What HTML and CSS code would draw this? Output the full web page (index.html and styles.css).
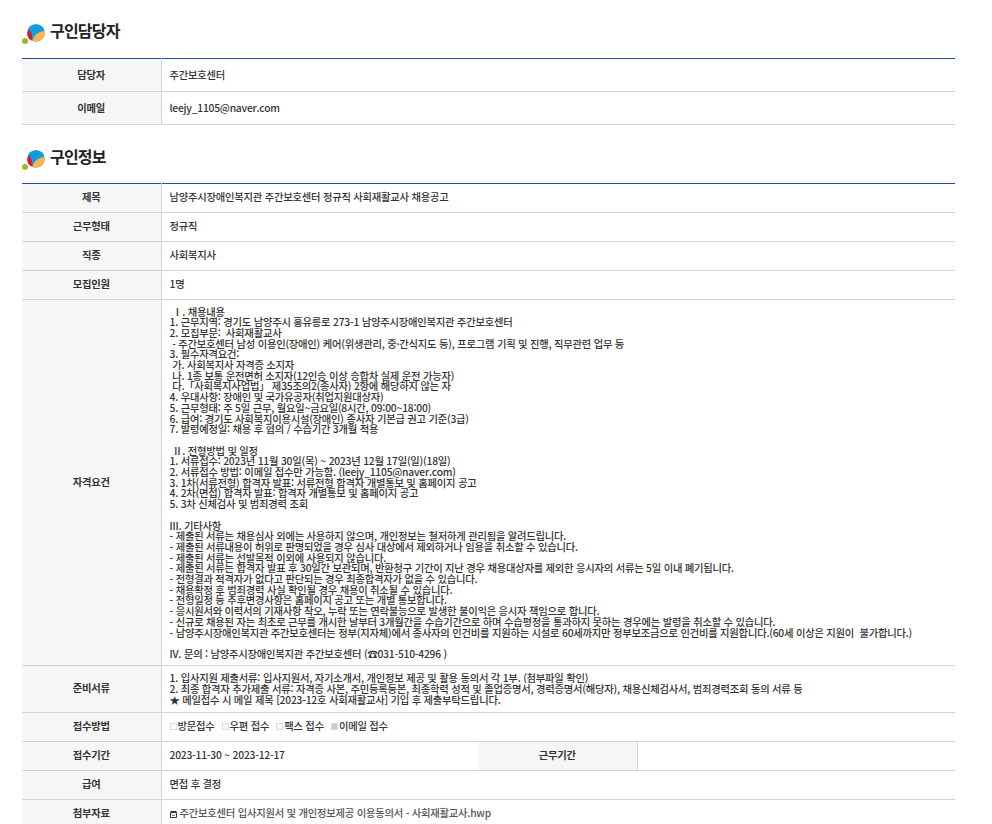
FILE: index.html
```html
<!DOCTYPE html>
<html lang="ko">
<head>
<meta charset="utf-8">
<title>구인정보</title>
<link rel="stylesheet" href="styles.css">
</head>
<body>
<main class="page">
  <h2 class="heading">
    <svg class="logo" viewBox="0 0 23 20" width="23" height="20"><circle cx="3" cy="17" r="3" fill="#97bb2c"/><circle cx="14" cy="8.800" r="8.800" fill="#0f9ee2"/><path d="M10.500 17C11 12 16 7.500 22.800 7 23.500 12.500 20 17.600 14 17.600c-1.300 0-2.500-.2-3.500-.6z" fill="#fbb450"/><path d="M7 14.800C5 12.500 4.700 8.500 6.500 5.500 9.500 7.500 10.500 11 10 16.500 9 16.200 7.800 15.600 7 14.800z" fill="#e4142b"/></svg>
    <span>구인담당자</span>
  </h2>
  <table class="info info-contact">
    <colgroup><col class="c-label"><col></colgroup>
    <tr class="r-contact"><th>담당자</th><td>주간보호센터</td></tr>
    <tr class="r-contact"><th>이메일</th><td>leejy_1105@naver.com</td></tr>
  </table>
  <h2 class="heading heading-second">
    <svg class="logo" viewBox="0 0 23 20" width="23" height="20"><circle cx="3" cy="17" r="3" fill="#97bb2c"/><circle cx="14" cy="8.800" r="8.800" fill="#0f9ee2"/><path d="M10.500 17C11 12 16 7.500 22.800 7 23.500 12.500 20 17.600 14 17.600c-1.300 0-2.500-.2-3.500-.6z" fill="#fbb450"/><path d="M7 14.800C5 12.500 4.700 8.500 6.500 5.500 9.500 7.500 10.500 11 10 16.500 9 16.200 7.800 15.600 7 14.800z" fill="#e4142b"/></svg>
    <span>구인정보</span>
  </h2>
  <table class="info">
    <colgroup><col class="c-label"><col class="c-mid"><col class="c-label2"><col></colgroup>
    <tr><th>제목</th><td colspan="3">남양주시장애인복지관 주간보호센터 정규직 사회재활교사 채용공고</td></tr>
    <tr><th>근무형태</th><td colspan="3">정규직</td></tr>
    <tr><th>직종</th><td colspan="3">사회복지사</td></tr>
    <tr><th>모집인원</th><td colspan="3">1명</td></tr>
    <tr><th>자격요건</th><td colspan="3" class="long"> Ⅰ. 채용내용
1. 근무지역: 경기도 남양주시 홍유릉로 273-1 남양주시장애인복지관 주간보호센터
2. 모집부문:  사회재활교사
 - 주간보호센터 남성 이용인(장애인) 케어(위생관리, 중·간식지도 등), 프로그램 기획 및 진행, 직무관련 업무 등
3. 필수자격요건:
 가. 사회복지사 자격증 소지자
 나. 1종 보통 운전면허 소지자(12인승 이상 승합차 실제 운전 가능자)
 다.「사회복지사업법」 제35조의2(종사자) 2항에 해당하지 않는 자
4. 우대사항: 장애인 및 국가유공자(취업지원대상자)
5. 근무형태: 주 5일 근무, 월요일~금요일(8시간, 09:00~18:00)
6. 급여: 경기도 사회복지이용시설(장애인) 종사자 기본급 권고 기준(3급)
7. 발령예정일: 채용 후 협의 / 수습기간 3개월 적용

 Ⅱ. 전형방법 및 일정
1. 서류접수: 2023년 11월 30일(목) ~ 2023년 12월 17일(일)(18일)
2. 서류접수 방법: 이메일 접수만 가능함. (leejy_1105@naver.com)
3. 1차(서류전형) 합격자 발표: 서류전형 합격자 개별통보 및 홈페이지 공고
4. 2차(면접) 합격자 발표: 합격자 개별통보 및 홈페이지 공고
5. 3차 신체검사 및 범죄경력 조회

III. 기타사항
- 제출된 서류는 채용심사 외에는 사용하지 않으며, 개인정보는 철저하게 관리됨을 알려드립니다.
- 제출된 서류내용이 허위로 판명되었을 경우 심사 대상에서 제외하거나 임용을 취소할 수 있습니다.
- 제출된 서류는 선발목적 이외에 사용되지 않습니다.
- 제출된 서류는 합격자 발표 후 30일간 보관되며, 반환청구 기간이 지난 경우 채용대상자를 제외한 응시자의 서류는 5일 이내 폐기됩니다.
- 전형결과 적격자가 없다고 판단되는 경우 최종합격자가 없을 수 있습니다.
- 채용확정 후 범죄경력 사실 확인될 경우 채용이 취소될 수 있습니다.
- 전형일정 등 추후변경사항은 홈페이지 공고 또는 개별 통보합니다.
- 응시원서와 이력서의 기재사항 착오, 누락 또는 연락불능으로 발생한 불이익은 응시자 책임으로 합니다.
- 신규로 채용된 자는 최초로 근무를 개시한 날부터 3개월간을 수습기간으로 하며 수습평정을 통과하지 못하는 경우에는 발령을 취소할 수 있습니다.
- 남양주시장애인복지관 주간보호센터는 정부(지자체)에서 종사자의 인건비를 지원하는 시설로 60세까지만 정부보조금으로 인건비를 지원합니다.(60세 이상은 지원이  불가합니다.)

IV. 문의 : 남양주시장애인복지관 주간보호센터 (☎031-510-4296 )</td></tr>
    <tr><th>준비서류</th><td colspan="3" class="long long-docs">1. 입사지원 제출서류: 입사지원서, 자기소개서, 개인정보 제공 및 활용 동의서 각 1부. (첨부파일 확인)
2. 최종 합격자 추가제출 서류: 자격증 사본, 주민등록등본, 최종학력 성적 및 졸업증명서, 경력증명서(해당자), 채용신체검사서, 범죄경력조회 동의 서류 등
★ 메일접수 시 메일 제목 [2023-12호 사회재활교사] 기입 후 제출부탁드립니다.</td></tr>
    <tr><th>접수방법</th><td colspan="3"><span class="opt"><i class="box"></i>방문접수</span><span class="opt"><i class="box"></i>우편 접수</span><span class="opt"><i class="box"></i>팩스 접수</span><span class="opt"><i class="box box-on"></i>이메일 접수</span></td></tr>
    <tr><th>접수기간</th><td>2023-11-30 ~ 2023-12-17</td><th>근무기간</th><td></td></tr>
    <tr><th>급여</th><td colspan="3">면접 후 결정</td></tr>
    <tr><th>첨부자료</th><td colspan="3" class="file"><svg class="clip" viewBox="0 0 7 7" width="7" height="7"><path d="M.5 1.500h6v5h-6zM.5.500h6M2 3.500l1.500 1.500L5 3.500" fill="none" stroke="#333" stroke-width="1"/></svg>주간보호센터 입사지원서 및 개인정보제공 이용동의서 - 사회재활교사.hwp</td></tr>
  </table>
</main>
</body>
</html>
```

FILE: styles.css
```css
html, body { margin: 0; padding: 0; background: #fff; overflow: hidden; }
.page {
  width: 933px;
  height: 824px;
  margin-left: 22px;
  overflow: hidden;
  font-family: "Noto Sans CJK KR", "Noto Sans", sans-serif;
  color: #333;
}
.heading {
  display: flex;
  align-items: flex-start;
  gap: 5px;
  height: 58px;
  margin: 0;
  padding-top: 20px;
  box-sizing: border-box;
  font-size: 16px;
  line-height: 20px;
  font-weight: 700;
  letter-spacing: -0.8px;
  color: #222;
}
.logo { margin-top: 4px; flex: none; }
.heading-second { height: 58px; padding-top: 21px; }
.info {
  width: 933px;
  table-layout: fixed;
  border-collapse: collapse;
  border-top: 1px solid #1f4e9c;
  font-size: 10.3px;
  letter-spacing: -0.22px;
  line-height: 11px;
}
.c-label { width: 139px; }
.c-mid { width: 317px; }
.c-label2 { width: 159px; }
.info tr { height: 29px; }
.info .r-contact { height: 33px; }
.info th, .info td {
  padding: 0 0 3px;
  border-bottom: 1px solid #d4d4d4;
  vertical-align: middle;
}
.info .r-contact th, .info .r-contact td { padding-bottom: 1px; }
.info th {
  background: #f6f6f6;
  font-weight: 700;
  text-align: center;
  border-right: 1px solid #d4d4d4;
  color: #333;
}
.info td { padding-left: 8px; font-weight: 500; }
.info td.long {
  padding-top: 6.500px;
  padding-bottom: 5.500px;
  line-height: 10.700px;
  white-space: pre-wrap;
}
.info td.long-docs { padding-top: 7px; padding-bottom: 7px; }
.opt { margin-right: 7px; }
.box {
  display: inline-block;
  box-sizing: border-box;
  width: 7px;
  height: 7px;
  margin-right: 1px;
  border: 1px solid #ddd;
  background: #fafafa;
}
.box-on { background: #ccc; }
.file { color: #555; }
.clip { margin-right: 3px; vertical-align: -1px; }
```
